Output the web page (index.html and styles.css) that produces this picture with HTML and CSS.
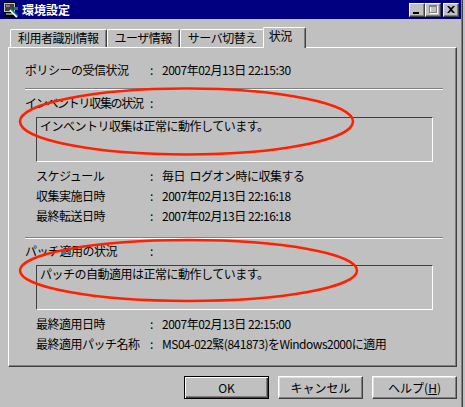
FILE: index.html
```html
<!DOCTYPE html>
<html lang="ja">
<head>
  <meta charset="UTF-8">
  <title>環境設定</title>
  <link rel="stylesheet" href="styles.css">
</head>
<body>
  <div class="window">
    <div class="titlebar">
      <svg class="app-icon" width="16" height="16" viewBox="0 0 16 16">
        <rect x="0.5" y="0.5" width="12" height="10" fill="#c0c0c0" stroke="#000"/>
        <rect x="2" y="2" width="9" height="7" fill="#404040"/>
        <rect x="3" y="3" width="4" height="2" fill="#808080"/>
        <rect x="3" y="11" width="7" height="2" fill="#808080"/>
        <rect x="1" y="13" width="11" height="2" fill="#000"/>
        <path d="M7 8 L14 15" stroke="#fff" stroke-width="2"/>
        <path d="M8 7 L15 14" stroke="#008080" stroke-width="1.5"/>
        <rect x="11" y="5" width="4" height="3" fill="#008080"/>
      </svg>
      <span class="title">環境設定</span>
      <div class="caption-buttons">
        <span class="cap-btn">
          <svg width="8" height="8" viewBox="0 0 8 8"><rect x="0" y="6" width="6" height="2" fill="#000"/></svg>
        </span>
        <span class="cap-btn">
          <svg width="9" height="9" viewBox="0 0 9 9">
            <rect x="1.5" y="1.5" width="7" height="7" fill="none" stroke="#fff"/>
            <rect x="0.5" y="0.5" width="7" height="7" fill="none" stroke="#808080"/>
            <rect x="0" y="1" width="8" height="1" fill="#808080"/>
          </svg>
        </span>
        <span class="cap-btn close">
          <svg width="8" height="7" viewBox="0 0 8 7"><path d="M0 0h2l2 2 2-2h2l-3 3.5 3 3.5h-2l-2-2-2 2h-2l3-3.5z" fill="#000"/></svg>
        </span>
      </div>
    </div>

    <div class="content">
      <div class="tabs">
        <div class="tab">利用者識別情報</div>
        <div class="tab">ユーザ情報</div>
        <div class="tab">サーバ切替え</div>
        <div class="tab active">状況</div>
      </div>

      <div class="panel">
        <div class="row">
          <span>ポリシーの受信状況</span><span>:</span><span>2007年02月13日 22:15:30</span>
        </div>
        <div class="sep"></div>

        <section class="block">
          <div class="row">
            <span class="tight">インベントリ収集の状況</span><span>:</span><span></span>
          </div>
          <div class="msg">インベントリ収集は正常に動作しています。</div>
          <div class="details">
            <div class="row sub"><span>スケジュール</span><span>:</span><span>毎日&nbsp; ログオン時に収集する</span></div>
            <div class="row sub"><span>収集実施日時</span><span>:</span><span>2007年02月13日 22:16:18</span></div>
            <div class="row sub"><span>最終転送日時</span><span>:</span><span>2007年02月13日 22:16:18</span></div>
          </div>
        </section>
        <div class="sep"></div>

        <section class="block">
          <div class="row">
            <span>パッチ適用の状況</span><span>:</span><span></span>
          </div>
          <div class="msg">パッチの自動適用は正常に動作しています。</div>
          <div class="details">
            <div class="row sub"><span>最終適用日時</span><span>:</span><span>2007年02月13日 22:15:00</span></div>
            <div class="row sub"><span>最終適用パッチ名称</span><span>:</span><span>MS04-022緊(841873)をWindows2000に適用</span></div>
          </div>
        </section>
      </div>

      <div class="actions">
        <button class="btn default">OK</button>
        <button class="btn">キャンセル</button>
        <button class="btn">ヘルプ(<u>H</u>)</button>
      </div>
    </div>

    <svg class="marks" width="465" height="407" viewBox="0 0 465 407">
      <ellipse cx="186.5" cy="121.5" rx="166.5" ry="33" fill="none" stroke="#ff2000" stroke-width="2.5"/>
      <ellipse cx="188.5" cy="270.5" rx="168.5" ry="30.5" fill="none" stroke="#ff2000" stroke-width="2.5"/>
    </svg>
  </div>
</body>
</html>
```

FILE: styles.css
```css
* { margin: 0; padding: 0; box-sizing: border-box; }
body {
  width: 465px;
  height: 407px;
  overflow: hidden;
  background: #c0c0c0;
  color: #000;
  font-family: "Noto Sans CJK JP", "Liberation Sans", sans-serif;
  font-size: 12px;
  letter-spacing: -0.5px;
}
.window {
  position: relative;
  width: 462px;
  height: 407px;
  border-right: 1px solid #808080;
  box-shadow: 1px 0 0 #404040;
}

/* title bar */
.titlebar {
  display: flex;
  align-items: center;
  height: 19px;
  padding: 0 2px 0 3px;
  background: #000080;
  color: #fff;
}
.app-icon { margin-right: 3px; }
.title { flex: 1; font-weight: bold; line-height: 19px; letter-spacing: 0; }
.caption-buttons { display: flex; }
.cap-btn {
  display: flex;
  align-items: center;
  justify-content: center;
  width: 16px;
  height: 14px;
  background: #c0c0c0;
  border: 1px solid;
  border-color: #fff #404040 #404040 #fff;
  box-shadow: inset -1px -1px #808080;
}
.cap-btn.close { margin-left: 2px; }

/* tabs */
.content { padding: 8px 0 0 8px; }
.tabs {
  display: flex;
  align-items: flex-end;
  height: 20px;
  padding-left: 2px;
}
.tab {
  height: 18px;
  padding: 0 7px;
  line-height: 16px;
  border: 1px solid #fff;
  border-right-color: #404040;
  border-bottom: none;
  border-radius: 2px 2px 0 0;
  box-shadow: inset -1px 0 #808080;
  white-space: nowrap;
}
.tab.active {
  position: relative;
  z-index: 1;
  height: 21px;
  margin: 0 0 -1px -2px;
  padding: 0 13px 0 5px;
  background: #c0c0c0;
}

/* panel */
.panel {
  width: 449px;
  height: 320px;
  padding: 12px 13px 0 16px;
  border: 1px solid;
  border-color: #fff #404040 #404040 #fff;
  box-shadow: inset -1px -1px #808080;
}
.row {
  display: grid;
  grid-template-columns: 125px 12px auto;
  line-height: 20px;
  white-space: nowrap;
}
.row.sub { padding-left: 11px; grid-template-columns: 114px 12px auto; }
.tight { letter-spacing: -1.3px; }
.sep {
  height: 2px;
  margin: 8px 0 3px;
  border-top: 1px solid #808080;
  border-bottom: 1px solid #fff;
}
.block + .sep { margin: 11px 0 2px; }
.msg {
  width: 397px;
  height: 45px;
  margin: 4px 0 0 11px;
  padding: 0 3px;
  line-height: 16px;
  border: 1px solid;
  border-color: #404040 #fff #fff #404040;
}
.details { margin-top: 4px; }

/* dialog buttons */
.actions {
  display: flex;
  justify-content: flex-end;
  gap: 9px;
  width: 449px;
  margin-top: 9px;
}
.btn {
  width: 85px;
  height: 23px;
  font: inherit;
  letter-spacing: 0;
  color: #000;
  background: #c0c0c0;
  border: 1px solid;
  border-color: #fff #404040 #404040 #fff;
  box-shadow: inset -1px -1px #808080, inset 1px 1px #dfdfdf;
}
.btn.default {
  border-color: #000;
  box-shadow: inset 1px 1px #fff, inset -1px -1px #404040, inset -2px -2px #808080;
}

.marks {
  position: absolute;
  top: 0;
  left: 0;
  pointer-events: none;
}
```
